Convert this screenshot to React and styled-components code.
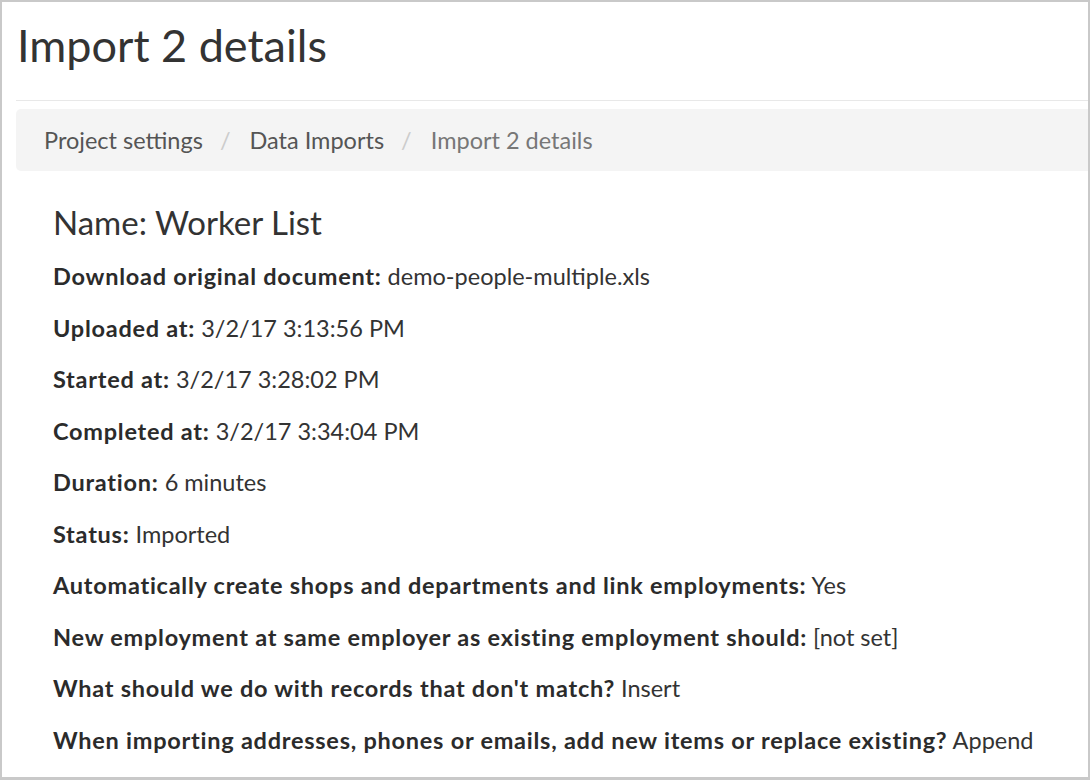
import React from 'react';
import styled, { createGlobalStyle } from 'styled-components';

const GlobalStyle = createGlobalStyle`
  html, body {
    margin: 0;
    padding: 0;
    background: #fff;
  }
  body {
    font-family: Lato, "Noto Sans", sans-serif;
    color: #333;
  }
`;

const details = [
  { label: 'Download original document:', value: 'demo-people-multiple.xls' },
  { label: 'Uploaded at:', value: '3/2/17 3:13:56 PM' },
  { label: 'Started at:', value: '3/2/17 3:28:02 PM' },
  { label: 'Completed at:', value: '3/2/17 3:34:04 PM' },
  { label: 'Duration:', value: '6 minutes' },
  { label: 'Status:', value: 'Imported' },
  { label: 'Automatically create shops and departments and link employments:', value: 'Yes' },
  { label: 'New employment at same employer as existing employment should:', value: '[not set]' },
  { label: "What should we do with records that don't match?", value: 'Insert' },
  { label: 'When importing addresses, phones or emails, add new items or replace existing?', value: 'Append' },
];

const crumbs = ['Project settings', 'Data Imports', 'Import 2 details'];

function App() {
  return (
    <>
      <GlobalStyle />
      <Frame>
        <Page>
          <Title>Import 2 details</Title>
          <Divider />
          <Breadcrumb>
            {crumbs.map((c, i) => (
              <React.Fragment key={c}>
                {i > 0 && <Sep>/</Sep>}
                <Crumb $active={i === crumbs.length - 1}>{c}</Crumb>
              </React.Fragment>
            ))}
          </Breadcrumb>
          <Details>
            <Name>Name: Worker List</Name>
            {details.map((d) => (
              <Row key={d.label}>
                <Label>{d.label}</Label> {d.value}
              </Row>
            ))}
          </Details>
        </Page>
      </Frame>
    </>
  );
}

const Frame = styled.div`
  box-sizing: border-box;
  width: 1090px;
  height: 780px;
  border: 2px solid #c9c9c9;
  border-bottom-width: 3px;
  overflow: hidden;
  background: #fff;
`;

const Page = styled.div`
  width: 1100px;
  padding-left: 14px;
`;

const Title = styled.h1`
  margin: 0;
  padding: 16px 0 0 1px;
  font-size: 45px;
  font-weight: 400;
  line-height: 54px;
  color: #333;
`;

const Divider = styled.hr`
  margin: 28px 0 0;
  border: 0;
  border-top: 1px solid #e8e8e8;
`;

const Breadcrumb = styled.nav`
  margin-top: 8px;
  height: 62px;
  display: flex;
  align-items: center;
  padding-left: 28px;
  background: #f4f4f4;
  border-radius: 5px;
  font-size: 23.5px;
  line-height: 28px;
`;

const Crumb = styled.span`
  color: ${(p) => (p.$active ? '#777' : '#555')};
`;

const Sep = styled.span`
  color: #ccc;
  padding: 0 19px 0 17px;
`;

const Details = styled.div`
  padding: 32px 0 0 37px;
`;

const Name = styled.h3`
  margin: 0 0 10px;
  font-size: 33px;
  font-weight: 400;
  line-height: 38px;
  color: #333;
`;

const Row = styled.p`
  margin: 0;
  font-size: 23.5px;
  line-height: 51.5px;
  color: #333;
  white-space: nowrap;
`;

const Label = styled.strong`
  font-weight: 700;
  letter-spacing: 0.75px;
  color: #2b2b2b;
`;

export default App;
